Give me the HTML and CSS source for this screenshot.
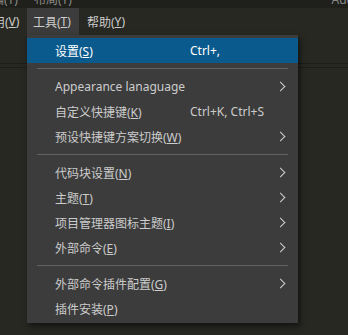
FILE: index.html
```html
<!DOCTYPE html>
<html lang="zh-CN">

<head>
  <meta charset="UTF-8">
  <title>工具菜单</title>
  <link rel="stylesheet" href="styles.css">
</head>

<body>
  <div class="titlebar">
    <span class="ghost">编(T)</span>
    <span class="ghost">布局(Y)</span>
    <span class="ghost ghost-right">Add</span>
  </div>

  <nav class="menubar">
    <div class="menubar-item cut">用(<u>V</u>)</div>
    <div class="menubar-item active">工具(<u>T</u>)</div>
    <div class="menubar-item">帮助(<u>Y</u>)</div>
  </nav>

  <div class="workspace">
    <div class="tabstrip"></div>

    <ul class="menu">
      <li class="menu-row selected"><span class="label">设置(<u>S</u>)</span><span class="keys">Ctrl+,</span></li>
      <li class="menu-sep"></li>
      <li class="menu-row"><span class="label">Appearance lanaguage</span><span class="arrow"></span></li>
      <li class="menu-row"><span class="label">自定义快捷键(<u>K</u>)</span><span class="keys">Ctrl+K, Ctrl+S</span></li>
      <li class="menu-row"><span class="label">预设快捷键方案切换(<u>W</u>)</span><span class="arrow"></span></li>
      <li class="menu-sep"></li>
      <li class="menu-row"><span class="label">代码块设置(<u>N</u>)</span><span class="arrow"></span></li>
      <li class="menu-row"><span class="label">主题(<u>T</u>)</span><span class="arrow"></span></li>
      <li class="menu-row"><span class="label">项目管理器图标主题(<u>I</u>)</span><span class="arrow"></span></li>
      <li class="menu-row"><span class="label">外部命令(<u>E</u>)</span><span class="arrow"></span></li>
      <li class="menu-sep"></li>
      <li class="menu-row"><span class="label">外部命令插件配置(<u>G</u>)</span><span class="arrow"></span></li>
      <li class="menu-row"><span class="label">插件安装(<u>P</u>)</span></li>
    </ul>
  </div>
</body>

</html>
```

FILE: styles.css
```css
* {
  margin: 0;
  padding: 0;
  box-sizing: border-box;
}

body {
  height: 100vh;
  background: #272822;
  color: #cccccc;
  font-family: 'Noto Sans', 'Noto Sans CJK SC', sans-serif;
  font-size: 12px;
  overflow: hidden;
}

u {
  text-decoration: underline;
  text-underline-offset: 1px;
}

.titlebar {
  height: 8px;
  background: #1f1f1c;
  display: flex;
  gap: 16px;
  overflow: hidden;
  padding-left: 0;
}

.ghost {
  line-height: 12px;
  margin-top: -6px;
  color: #8a8a85;
  white-space: nowrap;
}

.ghost:first-child {
  margin-left: -8px;
}

.ghost-right {
  margin-left: auto;
  margin-right: -6px;
}

.menubar {
  height: 27px;
  display: flex;
  align-items: stretch;
}

.menubar-item {
  display: flex;
  align-items: center;
  padding: 0 7px 0 8px;
  white-space: nowrap;
}

.menubar-item.cut {
  margin-left: -15px;
  width: 42px;
}

.menubar-item.active {
  background: #3c3c3c;
  padding: 0 6px 0 6px;
  width: 52px;
}

.workspace {
  position: relative;
  padding-top: 28px;
}

.tabstrip {
  height: 5px;
  border-top: 1px solid #1c1d19;
  border-bottom: 1px solid #1c1d19;
}

.menu {
  position: absolute;
  top: 0;
  left: 27px;
  width: 271px;
  list-style: none;
  background: #3c3c3c;
  padding: 3px 0 2px;
  box-shadow: 2px 3px 6px rgba(0, 0, 0, 0.55);
}

.menu-row {
  height: 25px;
  display: flex;
  align-items: center;
  padding: 0 11px 0 28px;
  white-space: nowrap;
}

.menu-row.selected {
  background: #0b5a8d;
  color: #ffffff;
}

.label {
  width: 135px;
  flex-shrink: 0;
}

.keys {
  flex: 1;
}

.arrow {
  margin-left: auto;
  width: 7px;
  height: 7px;
  border-top: 1.5px solid #d0d0d0;
  border-right: 1.5px solid #d0d0d0;
  transform: rotate(45deg);
  margin-right: 3px;
}

.menu-sep {
  height: 11px;
  display: flex;
  align-items: center;
  margin: 0 10px;
}

.menu-sep::after {
  content: '';
  flex: 1;
  height: 1px;
  background: #626262;
}
```
